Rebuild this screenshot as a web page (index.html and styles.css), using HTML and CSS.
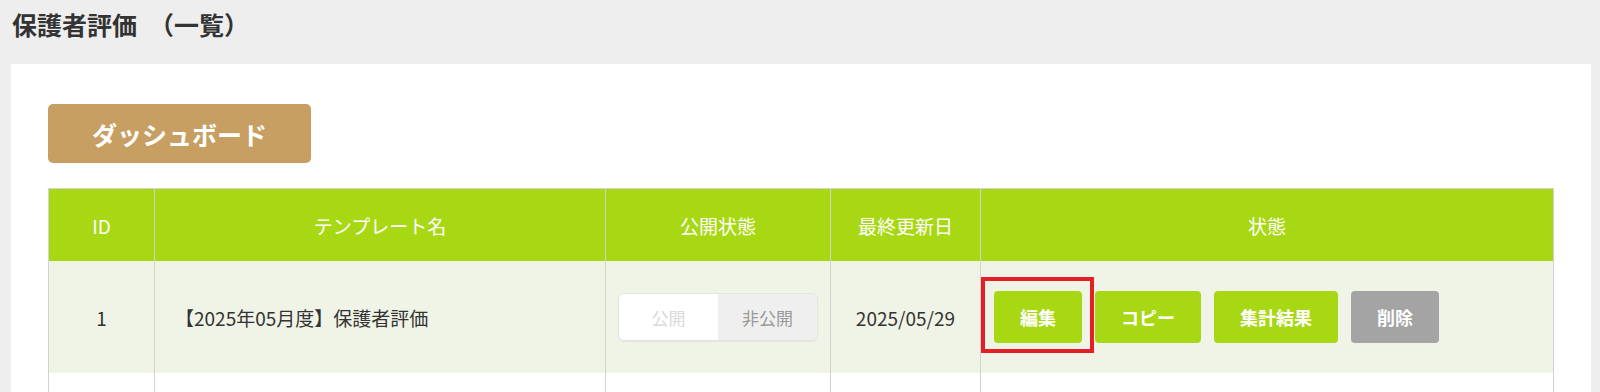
FILE: index.html
```html
<!DOCTYPE html>
<html lang="ja">
<head>
	<meta charset="utf-8">
	<title>保護者評価（一覧）</title>
	<link rel="stylesheet" href="styles.css">
</head>
<body>
	<header class="page-head">
		<h1>保護者評価<span class="sub">（一覧）</span></h1>
	</header>
	<main class="panel">
		<a class="btn-dashboard" href="#">ダッシュボード</a>
		<table class="list">
			<thead>
				<tr>
					<th class="col-id">ID</th>
					<th class="col-name">テンプレート名</th>
					<th class="col-pub">公開状態</th>
					<th class="col-date">最終更新日</th>
					<th class="col-state">状態</th>
				</tr>
			</thead>
			<tbody>
				<tr class="odd">
					<td>1</td>
					<td class="name">【2025年05月度】保護者評価</td>
					<td>
						<div class="toggle">
							<span class="toggle-on">公開</span>
							<span class="toggle-off">非公開</span>
						</div>
					</td>
					<td>2025/05/29</td>
					<td>
						<div class="actions">
							<span class="marked"><button class="act">編集</button></span>
							<button class="act">コピー</button>
							<button class="act">集計結果</button>
							<button class="act gray">削除</button>
						</div>
					</td>
				</tr>
				<tr class="even">
					<td></td>
					<td></td>
					<td></td>
					<td></td>
					<td></td>
				</tr>
			</tbody>
		</table>
	</main>
</body>
</html>
```

FILE: styles.css
```css
/* fonts */
body {
	font-family: "Noto Sans CJK JP", "Noto Sans", sans-serif;
	font-size: 19px;
	color: #333;
}

.page-head h1 {
	font-size: 25px;
	font-weight: bold;
	text-spacing-trim: space-all;
}

.btn-dashboard {
	font-size: 25px;
	font-weight: bold;
}

.list th {
	font-size: 19px;
	font-weight: normal;
}

.toggle {
	font-size: 17px;
}

.act {
	font-family: inherit;
	font-size: 18px;
	font-weight: bold;
}

/* layout */
body {
	margin: 0;
}

.page-head {
	height: 64px;
	padding: 0 12px;
}

.page-head h1 {
	margin: 0;
	line-height: 48px;
}

.page-head .sub {
	margin-left: 12px;
}

main.panel {
	margin: 0 9px 0 11px;
	padding: 40px 37px;
}

.btn-dashboard {
	display: inline-flex;
	align-items: center;
	justify-content: center;
	width: 263px;
	height: 59px;
	margin-bottom: 25px;
	text-decoration: none;
}

table.list {
	width: 100%;
	table-layout: fixed;
	border-collapse: collapse;
}

.list th {
	height: 72px;
	padding: 0;
	text-align: center;
}

.list td {
	height: 112px;
	padding: 0;
	text-align: center;
}

.list .col-id { width: 105px; }
.list .col-name { width: 450px; }
.list .col-pub { width: 224px; }
.list .col-date { width: 149px; }

.list td.name {
	text-align: left;
	padding-left: 20px;
}

.toggle {
	display: inline-flex;
	vertical-align: middle;
	width: 198px;
	height: 46px;
	border-radius: 6px;
	overflow: hidden;
}

.toggle span {
	flex: 1;
	display: flex;
	align-items: center;
	justify-content: center;
}

.actions {
	display: flex;
	align-items: center;
	gap: 13px;
	padding-left: 13px;
}

.act {
	height: 52px;
	padding: 0 26px;
	border: 0;
	border-radius: 4px;
}

.marked {
	position: relative;
	display: inline-flex;
}

.marked::after {
	content: '';
	position: absolute;
	top: -14px;
	left: -13px;
	right: -12px;
	bottom: -10px;
	border: 4px solid #e51f26;
}

/* colors */
body {
	background-color: #eeeeee;
}

main.panel {
	background-color: #fff;
}

.btn-dashboard {
	background-color: #c89f62;
	color: #fff;
	border-radius: 5px;
}

table.list {
	border-top: 1px solid #d2d2d2;
}

.list th,
.list td {
	border-left: 1px solid #d2d2d2;
	border-right: 1px solid #d2d2d2;
}

.list th {
	background-color: #a8d814;
	color: #fff;
}

.list tr.odd td {
	background-color: #f0f4e6;
}

.toggle {
	border: 1px solid #e4e4e4;
	box-shadow: 0 1px 2px rgba(0, 0, 0, 0.06);
}

.toggle-on {
	background-color: #fff;
	color: #d9d9d9;
}

.toggle-off {
	background-color: #efefef;
	color: #999;
}

.act {
	background-color: #a8d814;
	color: #fff;
}

.act.gray {
	background-color: #a4a4a4;
}
```
